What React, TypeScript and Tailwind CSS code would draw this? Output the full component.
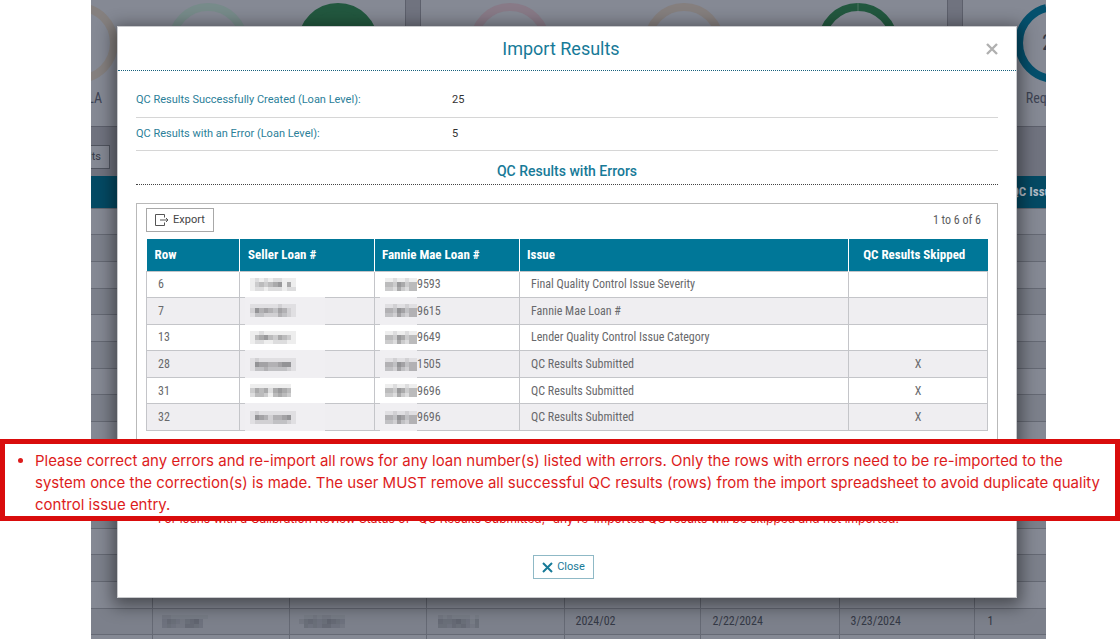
import { ReactNode } from 'react'

interface ErrorRow {
  row: number
  sellerMask: string[]
  loanSuffix: string
  issue: string
  skipped: boolean
}

// Each digit is the darkness of one block, 0 is empty
const LOAN_MASK = ['11211211', '44365344', '33253244']

const errorRows: ErrorRow[] = [
  { row: 6, sellerMask: ['1212122111', '1343456151', '1221222122'], loanSuffix: '9593', issue: 'Final Quality Control Issue Severity', skipped: false },
  { row: 7, sellerMask: ['1111112111', '2645435421', '1332224321'], loanSuffix: '9615', issue: 'Fannie Mae Loan #', skipped: false },
  { row: 13, sellerMask: ['1121111111', '1456435431', '1221122211'], loanSuffix: '9649', issue: 'Lender Quality Control Issue Category', skipped: false },
  { row: 28, sellerMask: ['1211111111', '1655445661', '1334333321'], loanSuffix: '1505', issue: 'QC Results Submitted', skipped: true },
  { row: 31, sellerMask: ['1111111110', '3545256540', '2443145430'], loanSuffix: '9696', issue: 'QC Results Submitted', skipped: true },
  { row: 32, sellerMask: ['1211111111', '1654244561', '1222233321'], loanSuffix: '9696', issue: 'QC Results Submitted', skipped: true },
]

const queueRows = Array.from({ length: 17 }, (_, i) => i)

const narrow = "font-['Liberation_Sans_Narrow','Roboto_Condensed','DejaVu_Sans_Condensed',sans-serif]"

/** Pixelated block shown in place of a hidden number */
function Mask({ rows, dark = false }: { rows: string[]; dark?: boolean }) {
  const cols = rows[0].length
  return (
    <svg className="shrink-0" width={cols === 8 ? 32 : 46} height="13" viewBox={`0 0 ${cols} 3`} preserveAspectRatio="none" shapeRendering="crispEdges" aria-hidden="true">
      {rows.map((line, y) =>
        line.split('').map((level, x) => (
          <rect key={`${x}-${y}`} x={x} y={y} width="1" height="1" fill={dark ? '#50545f' : '#555558'} opacity={Number(level) * 0.1} />
        ))
      )}
    </svg>
  )
}

function Gauge({ color, fill = 'none', label, labelClass = 'text-center', children }: { color: string; fill?: string; label?: string; labelClass?: string; children?: ReactNode }) {
  return (
    <div className="flex flex-1 flex-col items-center pt-[3px]">
      <svg className="shrink-0" width="80" height="80" viewBox="0 0 80 80">
        <circle cx="40" cy="40" r="36" fill={fill} stroke={color} strokeWidth="8" />
        {children}
      </svg>
      <span className={`mt-[5px] w-full text-sm text-[#3d4353] ${labelClass}`}>{label}</span>
    </div>
  )
}

function QueuePage() {
  return (
    <div className={`h-screen overflow-hidden bg-[#70737f] text-[#343946] ${narrow}`}>
      <div className="flex h-[127px] gap-[14px]">
        <section className="flex w-[315px] shrink-0 justify-end border-r border-b border-[#5d606c] bg-[#858994] pr-0.5">
          <div className="flex w-[390px] shrink-0">
            <Gauge color="#85807f" label="SLA" labelClass="pr-[41px] text-right" />
            <Gauge color="#778b8a" />
            <Gauge color="#22583f" fill="#22583f" />
          </div>
        </section>
        <section className="flex flex-1 border-x border-b border-[#5d606c] bg-[#858994] px-[2px]">
          <Gauge color="#887a87" />
          <Gauge color="#857f7e" />
          <Gauge color="#22583f">
            <path d="M40 0V8" stroke="#4c7562" strokeWidth="1" />
          </Gauge>
        </section>
        <section className="flex w-[84px] shrink-0 border-b border-l border-[#5d606c] bg-[#858994]">
          <div className="flex w-[184px] shrink-0">
            <Gauge color="#04506d" label="Requested">
              <path d="M31 0 33 9" stroke="#858994" strokeWidth="2" />
              <text x="27" y="47" fontSize="22" fill="#343946">2</text>
            </Gauge>
          </div>
        </section>
      </div>
      <div className="flex h-[49px] items-start pt-[18px]">
        <button type="button" className="flex h-6 w-[19px] items-center justify-end border border-l-0 border-[#50545f] bg-[#858994] pr-2 font-[Roboto,sans-serif] text-[11px]">
          Results
        </button>
      </div>
      <table className="w-full table-fixed border-collapse text-left text-xs">
        <colgroup>
          <col className="w-[61px]" />
          <col className="w-[137px]" />
          <col className="w-[137px]" />
          <col className="w-[138px]" />
          <col className="w-[136px]" />
          <col className="w-[139px]" />
          <col className="w-[135px]" />
          <col />
        </colgroup>
        <thead>
          <tr className="h-8 bg-[#044a64] text-[13px] text-[#b3bcc7]">
            <th colSpan={7} />
            <th className="p-0 pl-[37px] font-bold whitespace-nowrap">QC Issue</th>
          </tr>
        </thead>
        <tbody>
          {queueRows.map((i) => (
            <tr key={i} className="h-[27px] border-y border-[#656974] bg-[#858994] even:bg-[#7c808b] [&:nth-child(3n+1)]:h-[26px]">
              <td className="p-0" />
              {i === 15 ? (
                <>
                  <td className="border-x border-[#656974] p-0 pl-[9px]"><Mask dark rows={['2211111111', '3543245630', '3432255430']} /></td>
                  <td className="border-x border-[#656974] p-0 pl-[9px]"><Mask dark rows={['0112122111', '2454346543', '0434355332']} /></td>
                  <td className="border-x border-[#656974] p-0 pl-[11px]"><Mask dark rows={['2121111010', '5445643140', '4435453240']} /></td>
                  <td className="border-x border-[#656974] p-0 pl-[11px]">2024/02</td>
                  <td className="border-x border-[#656974] p-0 pl-3">2/22/2024</td>
                  <td className="border-x border-[#656974] p-0 pl-[11px]">3/23/2024</td>
                  <td className="border-l border-[#656974] p-0 pl-[13px]">1</td>
                </>
              ) : (
                [0, 1, 2, 3, 4, 5, 6].map((c) => <td key={c} className="border-l border-[#656974] p-0" />)
              )}
            </tr>
          ))}
        </tbody>
      </table>
    </div>
  )
}

function ErrorTable() {
  const cell = 'border border-[#c4c5c9] p-0'
  return (
    <table className={`mt-[7px] h-[192px] w-full table-fixed border-collapse text-left text-xs text-[#68696c] ${narrow}`}>
      <colgroup>
        <col className="w-[93px]" />
        <col className="w-[135px]" />
        <col className="w-[145px]" />
        <col />
        <col className="w-[139px]" />
      </colgroup>
      <thead>
        <tr className="h-8 bg-[#007798] text-[13px] text-white">
          <th className="border-r border-white p-0 pl-2">Row</th>
          <th className="border-x border-white p-0 pl-2">Seller Loan #</th>
          <th className="border-x border-white p-0 pl-[7px]">Fannie Mae Loan #</th>
          <th className="border-x border-white p-0 pl-[7px]">Issue</th>
          <th className="border-l border-white p-0 pr-2 text-center">QC Results Skipped</th>
        </tr>
      </thead>
      <tbody>
        {errorRows.map((r) => (
          <tr key={r.row} className="group even:bg-[#efeef1]">
            <td className={`${cell} pl-[11px]`}>{r.row}</td>
            <td className={`${cell} relative pl-[10px]`}>
              <span className="absolute -inset-y-px left-[5px] hidden w-20 bg-[#f0eff2] group-even:block" />
              <span className="relative block"><Mask rows={r.sellerMask} /></span>
            </td>
            <td className={`${cell} relative pl-[10px]`}>
              <span className="absolute -inset-y-px left-[5px] hidden w-[37px] bg-[#f0eff2] group-even:block" />
              <span className="relative flex items-center"><Mask rows={LOAN_MASK} />{r.loanSuffix}</span>
            </td>
            <td className={`${cell} pl-[11px]`}>{r.issue}</td>
            <td className={`${cell} text-center`}>{r.skipped ? 'X' : ''}</td>
          </tr>
        ))}
      </tbody>
    </table>
  )
}

function ImportResultsDialog() {
  return (
    <div role="dialog" aria-labelledby="import-title" className="min-w-0 flex-1 border border-[#c9cacd] bg-white shadow-[0_4px_16px_4px_rgba(0,0,0,0.45)]">
      <header className="flex h-11 items-center border-b border-dotted border-[#17607c] px-[18px]">
        <h1 id="import-title" className="flex-1 text-center text-lg text-[#177a98]">Import Results</h1>
        <button type="button" aria-label="Close dialog">
          <svg width="12" height="12" viewBox="0 0 12 12" stroke="#b0b0b0" strokeWidth="2.4">
            <path d="M1 1 11 11M11 1 1 11" />
          </svg>
        </button>
      </header>

      <div className="px-[18px] pt-[13px]">
        <dl className="text-[11px] text-[#333]">
          <div className="flex h-[34px] items-center border-b border-[#d6d6d6]">
            <dt className="w-[316px] text-[#2b8099]">QC Results Successfully Created (Loan Level):</dt>
            <dd>25</dd>
          </div>
          <div className="flex h-[33px] items-center border-b border-[#d6d6d6]">
            <dt className="w-[316px] text-[#2b8099]">QC Results with an Error (Loan Level):</dt>
            <dd>5</dd>
          </div>
        </dl>
        <h2 className="flex h-[34px] items-center justify-center border-b border-dotted border-[#444] pt-1.5 text-sm font-medium text-[#177a98]">QC Results with Errors</h2>

        <section className="mt-[18px] border border-[#b9b9b9] px-[9px] pt-1 pb-[9px]">
          <div className="flex items-center justify-between">
            <button type="button" className="flex h-6 items-center gap-1 border border-[#a8a8a8] px-2 text-[11px] text-[#444]">
              <svg width="14" height="12" viewBox="0 0 14 12" fill="none" stroke="#555" strokeWidth="1">
                <path d="M9.500 3.500V.5H.5v11h9V8.500M5 6h8M11 4l2 2-2 2" />
              </svg>
              Export
            </button>
            <span className={`pr-[7px] text-xs text-[#5c5c5e] ${narrow}`}>1 to 6 of 6</span>
          </div>
          <ErrorTable />
        </section>

        <p className="mt-[70px] pl-[22px] font-[Inter,sans-serif] text-xs text-[#e01010]">
          For loans with a Calibration Review Status of “QC Results Submitted,” any re-imported QC results will be skipped and not imported.
        </p>
      </div>

      <footer className="flex justify-center pt-7 pr-[7px] pb-[18px]">
        <button type="button" className="flex h-6 items-center gap-1 border border-[#8fb9c6] px-2 text-[11px] text-[#177a98]">
          <svg width="11" height="11" viewBox="0 0 11 11" stroke="#177a98" strokeWidth="2">
            <path d="M1 1 10 10M10 1 1 10" />
          </svg>
          Close
        </button>
      </footer>
    </div>
  )
}

export default function App() {
  return (
    <div className="relative h-screen overflow-hidden bg-white pr-[74px] pl-[91px] font-[Roboto,sans-serif]">
      <div className="relative overflow-hidden">
        <QueuePage />
        <div className="absolute inset-0 flex items-start pt-[26px] pr-[29px] pl-[26px]">
          <ImportResultsDialog />
        </div>
      </div>

      <aside className="absolute inset-x-0 top-[439px] border-[5px] border-[#d90c0c] bg-white pt-1.5">
        <ul className="list-disc pl-[30px] font-[Inter,sans-serif] text-[15px] leading-[22px] text-[#dd1c1c]">
          <li>
            Please correct any errors and re-import all rows for any loan number(s) listed with errors. Only the rows with errors need to be re-imported to the system once the correction(s) is made. The user MUST remove all successful QC results (rows) from the import spreadsheet to avoid duplicate quality control issue entry.
          </li>
        </ul>
      </aside>
    </div>
  )
}
